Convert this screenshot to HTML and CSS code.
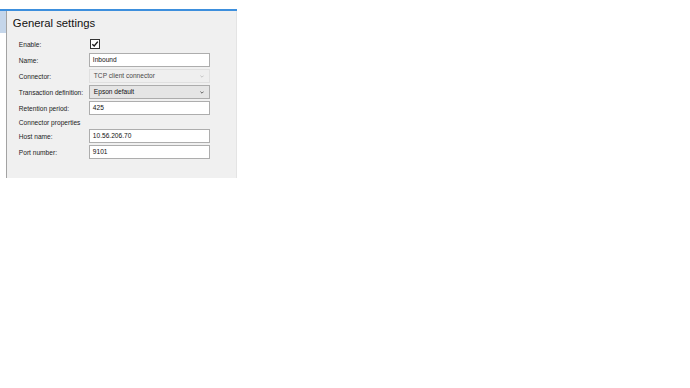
FILE: index.html
```html
<!DOCTYPE html>
<html lang="en">
<head>
    <meta charset="UTF-8">
    <title>General settings</title>
    <link rel="stylesheet" href="styles.css">
</head>
<body>
    <div class="window">
        <div class="side">
            <div class="side-tab"></div>
        </div>
        <div class="panel">
            <h1>General settings</h1>
            <div class="form">
                <label>Enable:</label>
                <div>
                    <span class="checkbox">
                        <svg width="8" height="8" viewBox="0 0 8 8"><path d="M1.3 4.2 L3.2 6 L6.8 1.6" fill="none" stroke="#1a1a1a" stroke-width="1.4"/></svg>
                    </span>
                </div>

                <label>Name:</label>
                <div class="input">Inbound</div>

                <label>Connector:</label>
                <div class="select disabled">TCP client connector<svg class="arrow" width="4" height="3" viewBox="0 0 4 3"><path d="M0.4 0.6 L2 2.2 L3.6 0.6" fill="none" stroke="currentColor" stroke-width="0.9"/></svg></div>

                <label>Transaction definition:</label>
                <div class="select">Epson default<svg class="arrow" width="4" height="3" viewBox="0 0 4 3"><path d="M0.4 0.6 L2 2.2 L3.6 0.6" fill="none" stroke="currentColor" stroke-width="0.9"/></svg></div>

                <label>Retention period:</label>
                <div class="input">425</div>

                <div class="group">Connector properties</div>

                <label>Host name:</label>
                <div class="input">10.56.206.70</div>

                <label>Port number:</label>
                <div class="input">9101</div>
            </div>
        </div>
    </div>
</body>
</html>
```

FILE: styles.css
```css
body {
    margin: 0;
    padding-top: 9px;
    background: white;
    font-family: 'Liberation Sans', Arial, sans-serif;
    color: #222;
}

.window {
    display: flex;
    width: 237px;
    border-top: 2px solid #3d8fdd;
}

.side {
    width: 6px;
}

.side-tab {
    height: 22px;
    background: #c5d6ea;
}

.panel {
    width: 229px;
    height: 161px;
    padding: 6px 0 0 6px;
    background: #f0f0f0;
    border-left: 1px solid #a3a3a3;
    border-right: 1px solid #e4e4e4;
}

h1 {
    margin: 0;
    font-size: 11.3px;
    font-weight: normal;
    line-height: 13px;
    color: #111;
}

.form {
    display: grid;
    grid-template-columns: 70px 121px;
    grid-template-rows: 14px 14px 14px 14px 14px 10px 14px 14px;
    row-gap: 2px;
    margin: 7px 0 0 6px;
    font-size: 6.6px;
    align-items: center;
}

label {
    color: #222;
}

.group {
    grid-column: 1 / 3;
    color: #222;
}

.checkbox {
    display: inline-flex;
    align-items: center;
    justify-content: center;
    width: 8px;
    height: 8px;
    margin-left: 1px;
    background: white;
    border: 1px solid #333;
}

.input {
    height: 12px;
    line-height: 12px;
    padding-left: 3px;
    background: white;
    border: 1px solid #adadad;
    color: #111;
}

.select {
    display: flex;
    align-items: center;
    justify-content: space-between;
    height: 12px;
    line-height: 12px;
    padding: 0 5px 0 4px;
    background: #e5e5e5;
    border: 1px solid #acacac;
    color: #111;
}

.select.disabled {
    background: #efefef;
    border-color: #e0e0e0;
    color: #4a4a4a;
}

.arrow {
    color: #555;
}

.select.disabled .arrow {
    color: #c0c0c0;
}
```
